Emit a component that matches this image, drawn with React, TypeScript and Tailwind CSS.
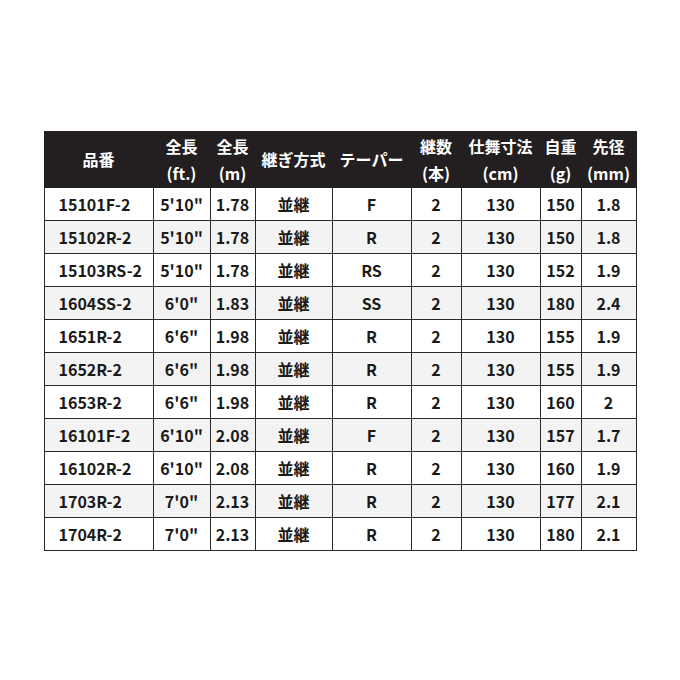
import React from "react";

const rows = [
  ["15101F-2", "5'10\"", "1.78", "並継", "F", "2", "130", "150", "1.8"],
  ["15102R-2", "5'10\"", "1.78", "並継", "R", "2", "130", "150", "1.8"],
  ["15103RS-2", "5'10\"", "1.78", "並継", "RS", "2", "130", "152", "1.9"],
  ["1604SS-2", "6'0\"", "1.83", "並継", "SS", "2", "130", "180", "2.4"],
  ["1651R-2", "6'6\"", "1.98", "並継", "R", "2", "130", "155", "1.9"],
  ["1652R-2", "6'6\"", "1.98", "並継", "R", "2", "130", "155", "1.9"],
  ["1653R-2", "6'6\"", "1.98", "並継", "R", "2", "130", "160", "2"],
  ["16101F-2", "6'10\"", "2.08", "並継", "F", "2", "130", "157", "1.7"],
  ["16102R-2", "6'10\"", "2.08", "並継", "R", "2", "130", "160", "1.9"],
  ["1703R-2", "7'0\"", "2.13", "並継", "R", "2", "130", "177", "2.1"],
  ["1704R-2", "7'0\"", "2.13", "並継", "R", "2", "130", "180", "2.1"],
];

const widths = [109, 57, 45, 77, 79, 50, 79, 41, 55];

const headers: React.ReactNode[] = [
  "品番",
  <>全長<br />(ft.)</>,
  <>全長<br />(m)</>,
  "継ぎ方式",
  "テーパー",
  <>継数<br />(本)</>,
  <>仕舞寸法<br />(cm)</>,
  <>自重<br />(g)</>,
  <>先径<br />(mm)</>,
];

export default function App() {
  return (
    <div
      className="w-[680px] h-[680px] bg-white flex justify-center pt-[131px]"
      style={{ fontFamily: '"Noto Sans CJK JP", "Noto Sans", sans-serif' }}
    >
      <div className="w-[593px]">
        <table className="table-fixed border-collapse w-[593px] text-[16px] font-bold text-[#1a1a1a]">
          <colgroup>
            {widths.map((w, i) => (
              <col key={i} style={{ width: w }} />
            ))}
          </colgroup>
          <thead>
            <tr className="h-[56px] bg-[#231f20] text-white">
              {headers.map((h, i) => (
                <th
                  key={i}
                  className="border border-[#231f20] border-l-[#5a5a5a] first:border-l-[#231f20] px-0 text-center font-bold leading-[27px] whitespace-nowrap"
                >
                  {h}
                </th>
              ))}
            </tr>
          </thead>
          <tbody>
            {rows.map((r, ri) => (
              <tr key={ri} className={`h-[33px] ${ri % 2 === 1 ? "bg-[#f3f3f3]" : "bg-white"}`}>
                {r.map((c, ci) => (
                  <td
                    key={ci}
                    className={`border border-[#2a2a2a] leading-[20px] whitespace-nowrap ${ci === 0 ? "text-left pl-[14px]" : "text-center px-0"}`}
                  >
                    {c}
                  </td>
                ))}
              </tr>
            ))}
          </tbody>
        </table>
      </div>
    </div>
  );
}
